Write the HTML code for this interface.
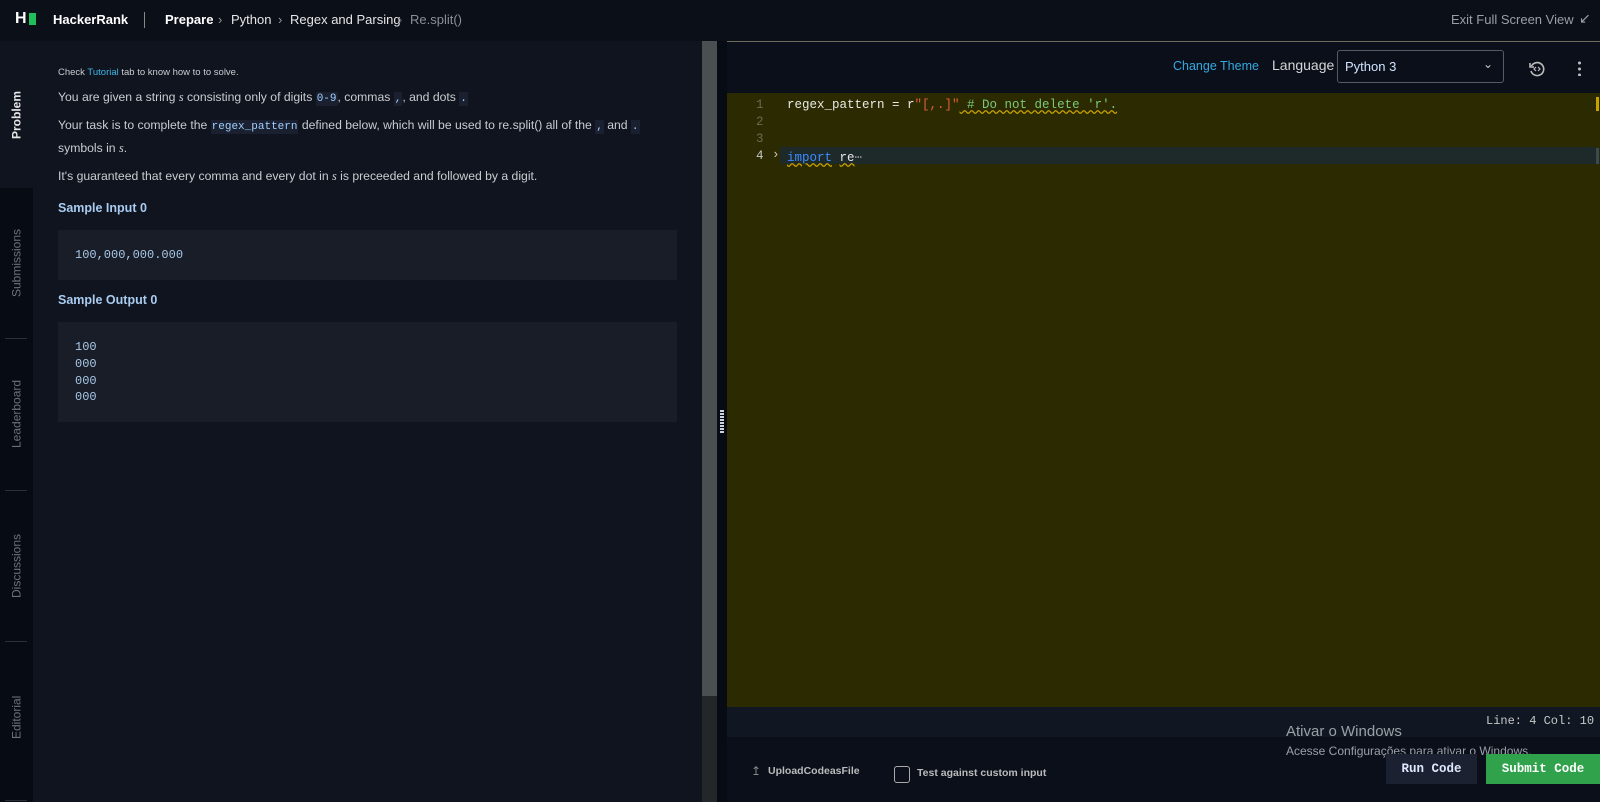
<!DOCTYPE html>
<html><head><meta charset="utf-8">
<style>
*{box-sizing:border-box;margin:0;padding:0}
body{width:1600px;height:802px;overflow:hidden;background:#0f141e;font-family:"Liberation Sans",sans-serif;color:#d4d7dc;position:relative}
.abs{position:absolute}
.top{left:0;top:0;width:1600px;height:41px;background:#0b0f18}
.top span{position:absolute;top:12px;font-size:13px;white-space:nowrap}
.side{left:0;top:41px;width:33px;height:761px;background:#070b14}
.tab{position:absolute;left:0;width:33px;font-size:12px;color:#6b717a;writing-mode:vertical-rl;transform:rotate(180deg);display:flex;align-items:center;justify-content:center}
.sep{position:absolute;left:5px;width:22px;height:1px;background:#2a2f38}
.p{position:absolute;left:58px;font-size:12.2px;color:#c9ccd1;white-space:nowrap}
code{font-family:"Liberation Mono",monospace;font-size:11px;background:#1a2030;color:#9fd0ff;padding:1px 1px}
.box{position:absolute;left:58px;width:619px;background:#181d28}
.mono{font-family:"Liberation Mono",monospace;font-size:12px;color:#a9c7e6}
.h{position:absolute;left:58px;font-size:12.5px;font-weight:bold;color:#a9ccf0}
.cl{position:absolute;font-family:"Liberation Mono",monospace;font-size:12.5px;white-space:nowrap}
</style></head><body>
<div class="abs top">
  <span style="left:15px;top:10px;font-weight:bold;font-size:16px;color:#fff">H</span>
  <div class="abs" style="left:29px;top:13px;width:7px;height:12px;background:#1fbf5b"></div>
  <span style="left:53px;font-weight:bold;color:#fff">HackerRank</span>
  <div class="abs" style="left:144px;top:12px;width:1px;height:16px;background:#888"></div>
  <span style="left:165px;font-weight:bold;color:#fff">Prepare</span>
  <span style="left:218px;color:#999">&#8250;</span>
  <span style="left:231px;color:#e6e6e6">Python</span>
  <span style="left:278px;color:#999">&#8250;</span>
  <span style="left:290px;color:#e6e6e6">Regex and Parsing</span>
  <span style="left:398px;color:#666">&#8250;</span>
  <span style="left:410px;color:#8a8f97">Re.split()</span>
  <span style="left:1451px;color:#9a9ea5">Exit Full Screen View</span>
  <span style="left:1579px;top:10px;color:#9a9ea5;font-size:14px">&#8601;</span>
</div>
<div class="abs side">
  <div class="tab" style="top:0;height:147px;background:#0f141e;color:#e6e6e6;font-weight:bold">Problem</div>
  <div class="tab" style="top:147px;height:150px">Submissions</div>
  <div class="sep" style="top:297px"></div>
  <div class="tab" style="top:298px;height:150px">Leaderboard</div>
  <div class="sep" style="top:449px"></div>
  <div class="tab" style="top:450px;height:150px">Discussions</div>
  <div class="sep" style="top:600px"></div>
  <div class="tab" style="top:601px;height:150px">Editorial</div>
  <div class="sep" style="top:759px"></div>
</div>
<div class="p" style="top:67px;font-size:9.5px">Check <span style="color:#3fb6e8">Tutorial</span> tab to know how to to solve.</div>
<div class="p" style="top:90px">You are given a string <i style="font-family:'Liberation Serif',serif">s</i> consisting only of digits <code>0-9</code>, commas <code>,</code>, and dots <code>.</code></div>
<div class="p" style="top:118px">Your task is to complete the <code>regex_pattern</code> defined below, which will be used to re.split() all of the <code>,</code> and <code>.</code></div>
<div class="p" style="top:141px">symbols in <i style="font-family:'Liberation Serif',serif">s</i>.</div>
<div class="p" style="top:169px">It's guaranteed that every comma and every dot in <i style="font-family:'Liberation Serif',serif">s</i> is preceeded and followed by a digit.</div>
<div class="h" style="top:201px">Sample Input 0</div>
<div class="box" style="top:230px;height:50px"><div class="mono abs" style="left:17px;top:18px">100,000,000.000</div></div>
<div class="h" style="top:293px">Sample Output 0</div>
<div class="box" style="top:322px;height:100px"><div class="mono abs" style="left:17px;top:17px;line-height:16.8px">100<br>000<br>000<br>000</div></div>
<div class="abs" style="left:702px;top:41px;width:15px;height:655px;background:#4a4f52"></div>
<div class="abs" style="left:702px;top:696px;width:15px;height:106px;background:#23272a"></div>
<div class="abs" style="left:717px;top:41px;width:10px;height:761px;background:#070b14"></div>
<div class="abs" style="left:720px;top:410px;width:4px;height:24px;background:repeating-linear-gradient(#cfd3e0 0 2px,transparent 2px 3px)"></div>
<div class="abs" style="left:727px;top:41px;width:873px;height:52px;background:#0a0f1a;border-top:1px solid #6e6c5c"></div>
<div class="abs" style="left:1173px;top:59px;font-size:12.5px;color:#34a9e0">Change Theme</div>
<div class="abs" style="left:1272px;top:57px;font-size:14px;color:#d6d6d6">Language</div>
<div class="abs" style="left:1337px;top:50px;width:167px;height:33px;border:1px solid #555b66;border-radius:3px;font-size:13px;color:#d0e4ff;padding:8px 7px">Python 3<span style="position:absolute;right:10px;top:6px;color:#ccc;font-size:12px">&#8964;</span></div>
<svg class="abs" style="left:1528px;top:60px" width="18" height="18" viewBox="0 0 18 18"><path d="M3.5 6 A6.5 6.5 0 1 1 3 11" fill="none" stroke="#bbb" stroke-width="1.6"/><path d="M2 3v4h4" fill="none" stroke="#bbb" stroke-width="1.6"/><path d="M8 7l-2 2 2 2M10 7l2 2-2 2" fill="none" stroke="#bbb" stroke-width="1.2"/></svg>
<div class="abs" style="left:1578px;top:60px;width:3px;height:16px;background:radial-gradient(circle,#bbb 1.4px,transparent 1.6px) 0 0/3px 6px"></div>
<div class="abs" style="left:727px;top:93px;width:873px;height:614px;background:#2b2a00"></div>
<div class="abs" style="left:1596px;top:97px;width:3px;height:14px;background:#c8a200"></div>
<div class="abs" style="left:1596px;top:148px;width:3px;height:16px;background:#3a4a55"></div>
<div class="abs" style="left:780px;top:147px;width:816px;height:17px;background:#1e2a2a"></div>
<div class="cl" style="left:756px;top:98px;color:#6a6b50">1</div>
<div class="cl" style="left:756px;top:115px;color:#6a6b50">2</div>
<div class="cl" style="left:756px;top:132px;color:#6a6b50">3</div>
<div class="cl" style="left:756px;top:149px;color:#c8c8c8">4</div>
<div class="cl" style="left:772px;top:148px;color:#c8c8c8">&#8250;</div>
<div class="cl" style="left:787px;top:98px;color:#e8e8e8">regex_pattern = r<span style="color:#e0603a">"[,.]"</span><span style="color:#7ec87a;text-decoration:underline wavy #c8a200"> # Do not delete 'r'.</span></div>
<div class="cl" style="left:787px;top:149px;color:#e8e8e8"><span style="color:#3b8cff;text-decoration:underline wavy #c8a200">import</span> <span style="text-decoration:underline wavy #c8a200">re</span><span style="color:#888">&#8943;</span></div>
<div class="abs" style="left:727px;top:707px;width:873px;height:30px;background:#111722"></div>
<div class="cl" style="left:1486px;top:714px;color:#c8c8c8;font-size:12px">Line: 4 Col: 10</div>
<div class="abs" style="left:727px;top:737px;width:873px;height:65px;background:#0a0f1a"></div>
<div class="abs" style="left:1286px;top:723px;font-size:15px;color:#9ba0a6">Ativar o Windows</div>
<div class="abs" style="left:1286px;top:744px;font-size:12px;color:#9ba0a6">Acesse Configurações para ativar o Windows.</div>
<div class="abs" style="left:751px;top:764px;font-size:12px;color:#888">&#8613;</div>
<div class="abs" style="left:768px;top:765px;font-size:10.5px;font-weight:bold;color:#bbb">UploadCodeasFile</div>
<div class="abs" style="left:894px;top:766px;width:16px;height:17px;border:1px solid #aaa;border-radius:3px"></div>
<div class="abs" style="left:917px;top:767px;font-size:10.5px;font-weight:bold;color:#bbb">Test against custom input</div>
<div class="abs" style="left:1386px;top:754px;width:91px;height:30px;background:#1b2130;color:#e0e8ff;font-family:'Liberation Mono',monospace;font-weight:bold;font-size:12.5px;text-align:center;line-height:30px">Run Code</div>
<div class="abs" style="left:1486px;top:754px;width:114px;height:30px;background:#31a24c;color:#fff;font-family:'Liberation Mono',monospace;font-weight:bold;font-size:12.5px;text-align:center;line-height:30px">Submit Code</div>
</body></html>
